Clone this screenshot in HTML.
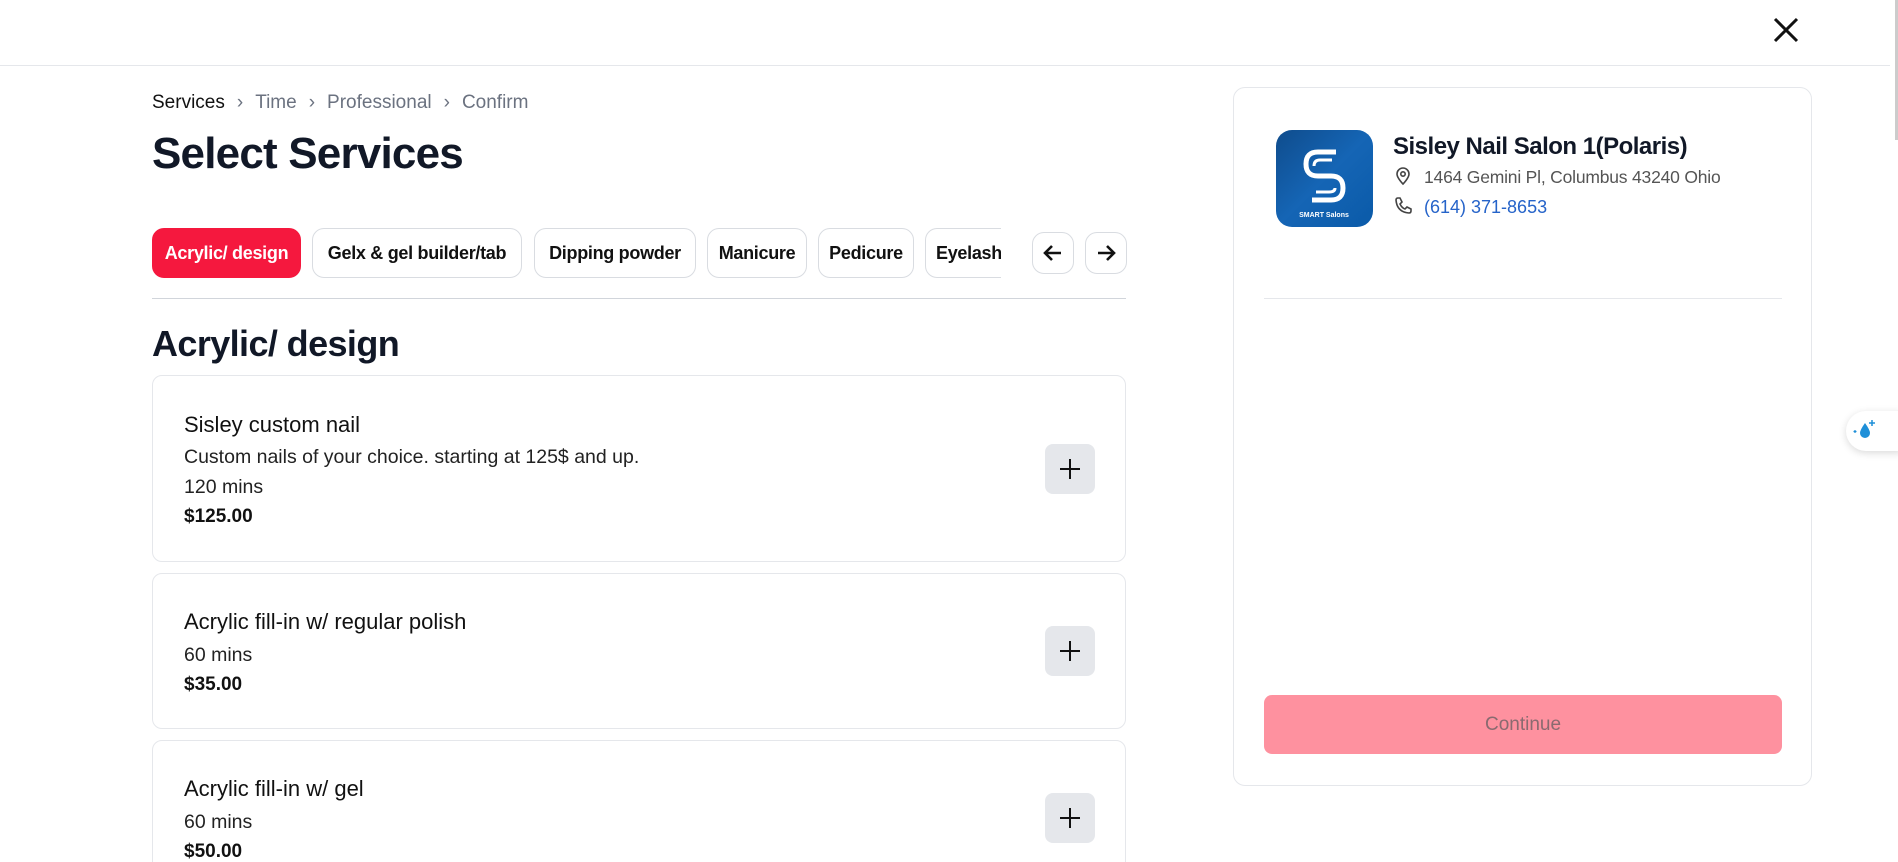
<!DOCTYPE html>
<html><head><meta charset="utf-8"><style>
*{box-sizing:border-box;margin:0;padding:0}
html,body{width:1898px;height:862px;overflow:hidden}
body{background:#fff;font-family:"Liberation Sans",sans-serif;color:#111827}
#w{position:relative;width:1898px;height:862px;overflow:hidden}
.abs{position:absolute}
.hdr{left:0;top:0;width:1890px;height:66px;border-bottom:1px solid #e5e7eb}
.bc{left:152px;top:92px;font-size:19px;color:#6b7280;display:flex;align-items:center}
.bc .ch{margin:0 12px}
h1{position:absolute;left:152px;top:129px;font-size:44px;font-weight:700;letter-spacing:-0.8px}
.tab{position:absolute;top:228px;height:50px;border:1px solid #d9dce1;border-radius:12px;font-size:18px;font-weight:700;display:flex;align-items:center;justify-content:center;white-space:nowrap;overflow:hidden;color:#111;letter-spacing:-0.3px}
.tab.on{background:#f5183e;color:#fff;border-color:#f5183e}
.arr{position:absolute;top:232px;width:42px;height:42px;border:1px solid #d9dce1;border-radius:12px;display:flex;align-items:center;justify-content:center}
.div{left:152px;top:298px;width:974px;height:1px;background:#d1d5db}
h2{position:absolute;left:152px;top:323px;font-size:36px;font-weight:700;letter-spacing:-0.6px}
.card{position:absolute;left:152px;width:974px;border:1px solid #e5e7eb;border-radius:10px}
.card .t{position:absolute;left:31px;font-size:22px;color:#111}
.card .d{position:absolute;left:31px;font-size:19.5px;color:#222}
.card .p{position:absolute;left:31px;font-size:19px;font-weight:700;color:#111}
.plus{position:absolute;left:892px;width:50px;height:50px;background:#e5e7eb;border-radius:8px;display:flex;align-items:center;justify-content:center}
.panel{left:1233px;top:87px;width:579px;height:699px;border:1px solid #e5e7eb;border-radius:12px}
</style></head><body><div id="w">
<div class="abs hdr"></div>
<svg class="abs" style="left:1772px;top:16px" width="28" height="28" viewBox="0 0 28 28"><path d="M3 3L25 25M25 3L3 25" stroke="#111" stroke-width="3"/></svg>
<div class="abs" style="left:1895px;top:0;width:3px;height:140px;background:#ccc"></div>

<div class="abs bc"><span style="color:#111">Services</span><span class="ch">›</span><span>Time</span><span class="ch">›</span><span>Professional</span><span class="ch">›</span><span>Confirm</span></div>
<h1>Select Services</h1>

<div class="tab on" style="left:152px;width:149px">Acrylic/ design</div>
<div class="tab" style="left:312px;width:210px">Gelx &amp; gel builder/tab</div>
<div class="tab" style="left:534px;width:162px">Dipping powder</div>
<div class="tab" style="left:707px;width:100px">Manicure</div>
<div class="tab" style="left:818px;width:96px">Pedicure</div>
<div class="tab" style="left:925px;width:76px;justify-content:flex-start;padding-left:10px;border-right:none;border-radius:12px 0 0 12px">Eyelash</div>
<div class="arr" style="left:1032px"><svg width="22" height="22" viewBox="0 0 22 22"><path d="M19 11H4M10 4L3 11L10 18" stroke="#111" stroke-width="2.6" fill="none"/></svg></div>
<div class="arr" style="left:1085px"><svg width="22" height="22" viewBox="0 0 22 22"><path d="M3 11H18M12 4L19 11L12 18" stroke="#111" stroke-width="2.6" fill="none"/></svg></div>

<div class="abs div"></div>
<h2>Acrylic/ design</h2>

<div class="card" style="top:375px;height:187px">
<div class="t" style="top:36px">Sisley custom nail</div>
<div class="d" style="top:70px">Custom nails of your choice. starting at 125$ and up.</div>
<div class="d" style="top:100px">120 mins</div>
<div class="p" style="top:130px">$125.00</div>
<div class="plus" style="top:68px"><svg width="24" height="24"><path d="M12 2V22M2 12H22" stroke="#111" stroke-width="2"/></svg></div>
</div>
<div class="card" style="top:573px;height:156px">
<div class="t" style="top:35px">Acrylic fill-in w/ regular polish</div>
<div class="d" style="top:70px">60 mins</div>
<div class="p" style="top:100px">$35.00</div>
<div class="plus" style="top:52px"><svg width="24" height="24"><path d="M12 2V22M2 12H22" stroke="#111" stroke-width="2"/></svg></div>
</div>
<div class="card" style="top:740px;height:160px">
<div class="t" style="top:35px">Acrylic fill-in w/ gel</div>
<div class="d" style="top:70px">60 mins</div>
<div class="p" style="top:100px">$50.00</div>
<div class="plus" style="top:52px"><svg width="24" height="24"><path d="M12 2V22M2 12H22" stroke="#111" stroke-width="2"/></svg></div>
</div>

<div class="abs panel"></div>
<div class="abs" style="left:1276px;top:130px;width:97px;height:97px;border-radius:16px;background:linear-gradient(135deg,#0f4c8c,#1565b5 50%,#0a5aa8);overflow:hidden">
<svg width="97" height="97" viewBox="0 0 97 97"><path d="M60 22H42Q30 22 30 34Q30 46 42 46H55Q67 46 67 58Q67 70 55 70H36" stroke="#fff" stroke-width="5" fill="none"/><path d="M56 30H44Q38 30 38 36" stroke="#fff" stroke-width="3" fill="none"/><path d="M59 58Q59 62 53 62H40" stroke="#fff" stroke-width="3" fill="none"/><text x="48" y="87" font-size="7" fill="#fff" text-anchor="middle" font-family="Liberation Sans" font-weight="700">SMART Salons</text></svg></div>
<div class="abs" style="left:1393px;top:133px;font-size:24px;font-weight:700;letter-spacing:-0.5px">Sisley Nail Salon 1(Polaris)</div>
<svg class="abs" style="left:1393px;top:166px" width="20" height="20" viewBox="0 0 20 20"><path d="M10 18C10 18 4 12 4 8A6 6 0 0 1 16 8C16 12 10 18 10 18Z" stroke="#444" stroke-width="1.6" fill="none"/><circle cx="10" cy="8" r="2.2" stroke="#444" stroke-width="1.6" fill="none"/></svg>
<div class="abs" style="left:1424px;top:167px;font-size:17.5px;color:#555;letter-spacing:-0.2px">1464 Gemini Pl, Columbus 43240 Ohio</div>
<svg class="abs" style="left:1393px;top:196px" width="20" height="20" viewBox="0 0 20 20"><path d="M3 4Q3 2 5 2L7 2L9 6L7 8Q9 12 12 13L14 11L18 13L18 15Q18 17 16 17Q4 16 3 4Z" stroke="#444" stroke-width="1.6" fill="none"/></svg>
<div class="abs" style="left:1424px;top:197px;font-size:18px;color:#2563c9">(614) 371-8653</div>
<div class="abs" style="left:1264px;top:298px;width:518px;height:1px;background:#e5e7eb"></div>
<div class="abs" style="left:1264px;top:695px;width:518px;height:59px;background:#fe919f;border-radius:8px;display:flex;align-items:center;justify-content:center;font-size:19px;color:#8a6a70">Continue</div>

<div class="abs" style="left:1846px;top:411px;width:56px;height:40px;background:#fff;border-radius:20px 0 0 20px;box-shadow:0 2px 8px rgba(0,0,0,.15)"><svg width="40" height="40" viewBox="0 0 40 40"><path d="M19 12Q14 19 14 22A5 5 0 0 0 24 22Q24 19 19 12Z" fill="#1e8fd8"/><path d="M26 9V15M23 12H29" stroke="#1e8fd8" stroke-width="1.5"/><path d="M9 19V22M7.5 20.5H10.5" stroke="#1e8fd8" stroke-width="1.2"/></svg></div>
</div></body></html>
